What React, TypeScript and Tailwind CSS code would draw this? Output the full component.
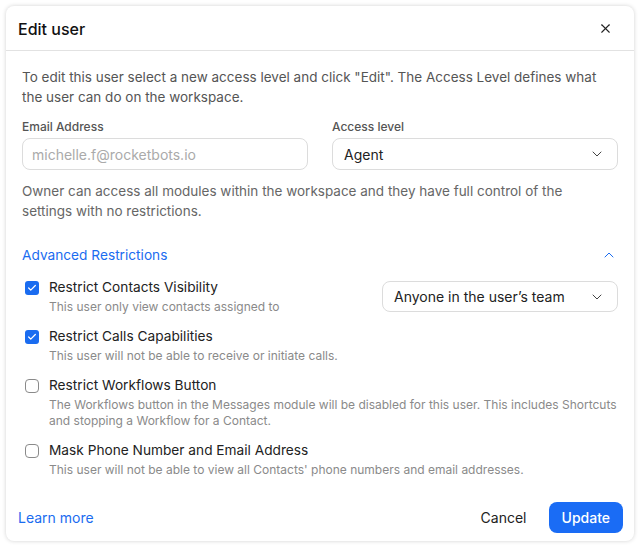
import { Check, ChevronDown, ChevronUp, X } from 'lucide-react'
import clsx from 'clsx'

interface RestrictionProps {
  title: string
  description: React.ReactNode
  checked?: boolean
  children?: React.ReactNode
}

function Restriction({ title, description, checked, children }: RestrictionProps) {
  return (
    <div className="flex items-start">
      <div
        className={clsx(
          'mt-[6px] ml-[3px] flex h-[14px] w-[14px] shrink-0 items-center justify-center',
          checked ? 'rounded-[3px] bg-[#1a6cf0]' : 'rounded-[4px] border border-[#8a8a8a] bg-white'
        )}
      >
        {checked && <Check className="h-[10px] w-[10px] text-white" strokeWidth={3} />}
      </div>
      <div className="ml-[10px] flex-1">
        <p className="text-[13.7px] leading-[24px] text-[#222]">{title}</p>
        <p className="text-[12px] leading-[16px] text-[#8a8a8a]">{description}</p>
      </div>
      {children}
    </div>
  )
}

export default function App() {
  return (
    <div className="min-h-[548px] bg-white p-[6px] font-['Inter',sans-serif]">
      <div className="h-[535px] w-[628px] rounded-[8px] bg-white shadow-[0_0_4px_rgba(0,0,0,0.18)]">
        <div className="flex h-[45px] items-center justify-between border-b border-[#e2e2e2] pl-[12px] pr-[21px] pt-[1px]">
          <h1 className="text-[16px] font-medium text-[#111]">Edit user</h1>
          <X className="h-[15px] w-[15px] text-[#222]" strokeWidth={1.8} />
        </div>

        <div className="px-[16px] pt-[16px]">
          <p className="text-[13.5px] leading-[20px] text-[#555]">
            To edit this user select a new access level and click "Edit". The Access Level defines what
            the user can do on the workspace.
          </p>

          <div className="mt-[12px] grid grid-cols-2 gap-[24px]">
            <div>
              <label className="block text-[12px] font-medium leading-[16px] text-[#555]">Email Address</label>
              <div className="mt-[3px] flex h-[32px] items-center rounded-[8px] border border-[#dcdcdc] px-[9px] text-[14px] text-[#aaa]">
                michelle.f@rocketbots.io
              </div>
            </div>
            <div>
              <label className="block text-[12px] font-medium leading-[16px] text-[#555]">Access level</label>
              <div className="mt-[3px] flex h-[32px] items-center justify-between rounded-[8px] border border-[#dcdcdc] pl-[11px] pr-[12px] text-[14px] text-[#222]">
                Agent
                <ChevronDown className="h-[16px] w-[16px] text-[#444]" strokeWidth={1.5} />
              </div>
            </div>
          </div>

          <p className="mt-[11px] text-[13.5px] leading-[20px] text-[#666]">
            Owner can access all modules within the workspace and they have full control of the
            <br />
            settings with no restrictions.
          </p>

          <div className="mt-[24px] flex h-[20px] items-center justify-between pr-[1px]">
            <span className="text-[13.7px] text-[#1a6cf0]">Advanced Restrictions</span>
            <ChevronUp className="h-[16px] w-[16px] text-[#1a6cf0]" strokeWidth={1.5} />
          </div>

          <div className="mt-[10px] flex flex-col gap-[9px]">
            <Restriction title="Restrict Contacts Visibility" description="This user only view contacts assigned to" checked>
              <div className="mt-[6px] flex h-[31px] w-[236px] items-center justify-between rounded-[8px] border border-[#dcdcdc] pl-[11px] pr-[12px] text-[14px] text-[#222]">
                Anyone in the user’s team
                <ChevronDown className="h-[16px] w-[16px] text-[#444]" strokeWidth={1.5} />
              </div>
            </Restriction>
            <Restriction
              title="Restrict Calls Capabilities"
              description="This user will not be able to receive or initiate calls."
              checked
            />
            <Restriction
              title="Restrict Workflows Button"
              description="The Workflows button in the Messages module will be disabled for this user. This includes Shortcuts and stopping a Workflow for a Contact."
            />
            <Restriction
              title="Mask Phone Number and Email Address"
              description="This user will not be able to view all Contacts' phone numbers and email addresses."
            />
          </div>
        </div>

        <div className="mt-[24px] flex items-center justify-between pl-[12px] pr-[11px]">
          <a className="text-[14px] text-[#1a6cf0]">Learn more</a>
          <div className="flex items-center gap-[22px]">
            <button className="text-[14px] text-[#222]">Cancel</button>
            <button className="h-[31px] rounded-[8px] bg-[#1a6cf5] px-[13px] text-[14px] font-medium text-white">
              Update
            </button>
          </div>
        </div>
      </div>
    </div>
  )
}
